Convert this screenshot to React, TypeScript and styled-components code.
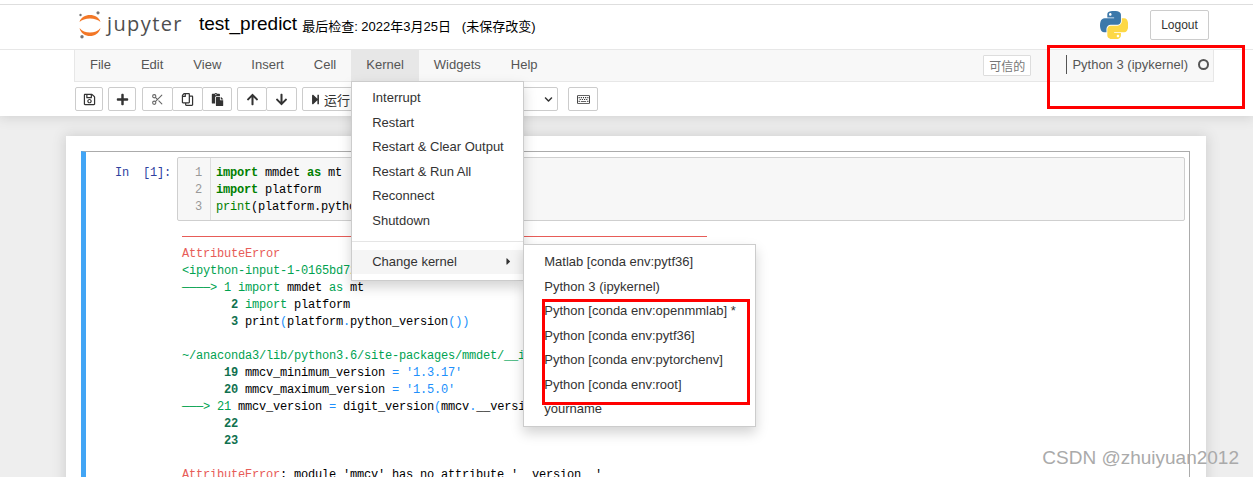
import React from "react";
import styled, { createGlobalStyle } from "styled-components";
import {
  FaRegSave,
  FaPlus,
  FaRegCopy,
  FaPaste,
  FaArrowUp,
  FaArrowDown,
  FaStepForward,
  FaStop,
  FaRedo,
  FaForward,
  FaRegKeyboard,
  FaChevronDown,
  FaCaretRight,
} from "react-icons/fa";
import { FiScissors } from "react-icons/fi";

const GlobalStyle = createGlobalStyle`
  html, body {
    margin: 0;
    padding: 0;
    height: 477px;
    overflow: hidden;
    background: #eeeeee;
  }
  body {
    font-family: "Liberation Sans", "Noto Sans CJK SC", sans-serif;
    font-size: 13px;
    color: #000;
  }
`;

const Page = styled.div`
  position: relative;
  width: 1253px;
  height: 477px;
  overflow: hidden;
`;

const TopArea = styled.div`
  background: #fff;
  padding-top: 4px;
  height: 116px;
  box-sizing: border-box;
  box-shadow: 0 0 12px 1px rgba(87, 87, 87, 0.2);
  position: relative;
  z-index: 2;
`;

const Header = styled.div`
  border-top: 1px solid #dedede;
  border-bottom: 1px solid #e7e7e7;
  height: 40px;
  display: flex;
  align-items: center;
  padding: 0 44px 4px 79px;
`;

const LogoText = styled.span`
  font-family: "Open Sans", sans-serif;
  font-size: 20px;
  line-height: 1;
  color: #4e4e4e;
  margin-left: 4px;
  letter-spacing: 1.4px;
  position: relative;
  top: -1px;
`;

const Title = styled.span`
  font-size: 19px;
  margin-left: 16px;
  position: relative;
  top: -1px;
`;

const Checkpoint = styled.span`
  font-size: 13px;
  margin-left: 5px;
  white-space: pre;
`;

const HeaderRight = styled.div`
  margin-left: auto;
  display: flex;
  align-items: center;
  gap: 22px;
`;

const LogoutButton = styled.button`
  width: 59px;
  height: 30px;
  padding: 0;
  background: #fff;
  border: 1px solid #ccc;
  border-radius: 2px;
  font: 12px "Liberation Sans", sans-serif;
  color: #333;
`;

const MenuBar = styled.div`
  margin-left: 74px;
  width: 1140px;
  height: 32px;
  box-sizing: border-box;
  background: #f8f8f8;
  border: 1px solid #e7e7e7;
  border-top: 0;
  display: flex;
  align-items: stretch;
`;

const NavItem = styled.div<{ $open?: boolean }>`
  position: relative;
  padding: 0 15px 2px;
  display: flex;
  align-items: center;
  color: #555;
  background: ${(p) => (p.$open ? "#e7e7e7" : "transparent")};
`;

const TrustBadge = styled.span`
  margin-left: auto;
  align-self: center;
  width: 48px;
  height: 21px;
  box-sizing: border-box;
  border: 1px solid #ddd;
  border-radius: 1px;
  background: #fff;
  font-size: 12px;
  color: #777;
  display: flex;
  align-items: center;
  justify-content: center;
`;

const KernelStatus = styled.div`
  margin-left: 35px;
  margin-right: 4px;
  padding-bottom: 2px;
  display: flex;
  align-items: center;
  color: #555;
  font-size: 13px;
`;

const Separator = styled.span`
  width: 1px;
  height: 19px;
  background: #555;
  margin-right: 5px;
`;

const KernelDot = styled.span`
  width: 7px;
  height: 7px;
  border: 2px solid #555;
  border-radius: 50%;
  margin-left: 10px;
`;

const Toolbar = styled.div`
  display: flex;
  align-items: center;
  padding: 5px 0 0 75px;
  height: 24px;
`;

const BtnGroup = styled.div<{ $gap?: number }>`
  display: flex;
  margin-right: ${(p) => p.$gap ?? 5}px;
`;

const ToolButton = styled.button<{ $w?: number }>`
  width: ${(p) => p.$w ?? 28}px;
  height: 24px;
  margin: 0 0 0 -1px;
  padding: 0;
  background: #fff;
  border: 1px solid #ccc;
  border-radius: 2px;
  color: #333;
  font: 13px "Liberation Sans", "Noto Sans CJK SC", sans-serif;
  display: flex;
  align-items: center;
  justify-content: center;
  svg {
    font-size: 13px;
  }
  &:first-child {
    margin-left: 0;
  }
`;

const RunButton = styled(ToolButton)`
  justify-content: flex-start;
  gap: 3px;
  padding-left: 7px;
  svg {
    font-size: 11px;
  }
`;

const MirroredCopy = styled(FaRegCopy)`
  transform: scaleX(-1);
`;

const LightScissors = styled(FiScissors)`
  color: #666;
`;

const CellTypeSelect = styled.div`
  width: 99px;
  height: 24px;
  box-sizing: border-box;
  border: 1px solid #ccc;
  border-radius: 2px;
  background: #fff;
  display: flex;
  align-items: center;
  justify-content: space-between;
  padding: 0 4px 0 8px;
  margin-right: 10px;
  color: #333;
  svg {
    font-size: 9px;
  }
`;

const Notebook = styled.div`
  margin: 20px 0 0 66px;
  width: 1140px;
  height: 400px;
  box-sizing: border-box;
  padding: 15px 16px 0 15px;
  background: #fff;
  box-shadow: 0 0 12px 1px rgba(87, 87, 87, 0.2);
`;

const Cell = styled.div`
  border: 1px solid #ababab;
  border-left: 5px solid #42a5f5;
  border-bottom: 0;
  height: 400px;
  box-sizing: border-box;
  padding: 5px 4px 0 0;
  display: grid;
  grid-template-columns: 91px 1fr;
  align-content: start;
  font-family: "Liberation Mono", monospace;
  font-size: 12px;
  line-height: 17px;
  letter-spacing: -0.2px;
`;

const Prompt = styled.div`
  color: #303f9f;
  padding: 8px 6px 0 0;
  text-align: right;
  white-space: pre;
`;

const InputArea = styled.div`
  display: flex;
  height: 64px;
  box-sizing: border-box;
  background: #f7f7f7;
  border: 1px solid #cfcfcf;
  border-radius: 2px;
`;

const Gutter = styled.div`
  width: 33px;
  box-sizing: border-box;
  border-right: 1px solid #ddd;
  padding: 7px 8px 0 0;
  text-align: right;
  color: #999;
`;

const CodeLines = styled.pre`
  margin: 0;
  padding: 7px 0 0 5px;
  font: inherit;
`;

const Keyword = styled.span`
  color: #008000;
  font-weight: bold;
`;

const Builtin = styled.span`
  color: #008000;
`;

const Output = styled.pre`
  grid-column: 2;
  margin: 7px 0 0;
  padding-left: 5px;
  font: inherit;
  white-space: pre;
`;

const ErrorRule = styled.div`
  width: 525px;
  height: 1px;
  background: #e75c58;
  margin: 8px 0 9px;
`;

const Ansi = styled.span<{ $c: "red" | "green" | "blue" | "num" }>`
  color: ${(p) =>
    ({ red: "#e75c58", green: "#00a250", blue: "#208ffb", num: "#10714f" }[p.$c])};
  font-weight: ${(p) => (p.$c === "num" ? "bold" : "normal")};
`;

const Dropdown = styled.div`
  position: absolute;
  top: 100%;
  left: 0;
  z-index: 10;
  width: 173px;
  box-sizing: border-box;
  padding: 3.5px 0 6px;
  background: #fff;
  border: 1px solid #ccc;
  box-shadow: 0 6px 12px rgba(0, 0, 0, 0.175);
  color: #333;
`;

const SubMenu = styled(Dropdown)`
  top: -6px;
  left: 100%;
  width: 233px;
  padding: 5px 0 5px;
`;

const MenuItem = styled.div<{ $active?: boolean }>`
  position: relative;
  display: flex;
  align-items: center;
  justify-content: space-between;
  height: 24.5px;
  padding: 0 9px 0 20px;
  white-space: nowrap;
  background: ${(p) => (p.$active ? "#f5f5f5" : "transparent")};
  svg {
    font-size: 11px;
    color: #333;
  }
`;

const Divider = styled.div`
  height: 1px;
  background: #e5e5e5;
  margin: 8px 0;
`;

const RedBox = styled.div<{ $x: number; $y: number; $w: number; $h: number }>`
  position: absolute;
  left: ${(p) => p.$x}px;
  top: ${(p) => p.$y}px;
  width: ${(p) => p.$w}px;
  height: ${(p) => p.$h}px;
  box-sizing: border-box;
  border: 3px solid #ff0000;
  z-index: 20;
`;

const Watermark = styled.div`
  position: absolute;
  right: 14px;
  bottom: 9px;
  z-index: 30;
  font-size: 19px;
  line-height: 21px;
  color: #aaaaaa;
`;

const JupyterMark = () => (
  <svg width="24" height="28" viewBox="0 0 24 28">
    <circle cx="19" cy="1.8" r="1.6" fill="#767677" />
    <circle cx="1.5" cy="4" r="1.2" fill="#767677" />
    <circle cx="3" cy="25.8" r="1.7" fill="#767677" />
    <path d="M.5 11C3 1.7 19 1.7 21.5 11 17 6.3 5 6.3.5 11Z" fill="#f37726" />
    <path d="M.5 17C3 27.7 19 27.7 21.5 17 17 23 5 23 .5 17Z" fill="#f37726" />
  </svg>
);

const PythonMark = () => (
  <svg width="28" height="28" viewBox="0 0 110 110">
    <path
      fill="#3c78aa"
      d="M54.919.001c-4.584.022-8.961.413-12.812 1.095C30.76 3.099 28.7 7.295 28.7 15.032v10.219h26.813v3.406H18.638c-7.793 0-14.616 4.684-16.75 13.594-2.462 10.213-2.571 16.586 0 27.25 1.905 7.938 6.457 13.594 14.25 13.594h9.218v-12.25c0-8.85 7.657-16.656 16.75-16.656h26.782c7.454 0 13.406-6.138 13.406-13.625V15.032c0-7.266-6.13-12.725-13.406-13.937C64.282.328 59.502-.02 54.919.001zm-14.5 8.219c2.77 0 5.031 2.299 5.031 5.125 0 2.816-2.262 5.094-5.031 5.094-2.78 0-5.031-2.278-5.031-5.094 0-2.826 2.252-5.125 5.031-5.125z"
    />
    <path
      fill="#fdd845"
      d="M85.638 28.657v11.906c0 9.231-7.826 17-16.75 17H42.106c-7.336 0-13.406 6.278-13.406 13.625v25.531c0 7.266 6.319 11.54 13.406 13.625 8.488 2.496 16.627 2.947 26.782 0 6.75-1.954 13.406-5.888 13.406-13.625V86.501H55.513v-3.406h40.188c7.793 0 10.696-5.436 13.406-13.594 2.8-8.399 2.68-16.476 0-27.25-1.926-7.757-5.604-13.594-13.406-13.594zm-15.063 64.656c2.78 0 5.031 2.278 5.031 5.094 0 2.826-2.252 5.125-5.031 5.125-2.77 0-5.031-2.299-5.031-5.125 0-2.816 2.262-5.094 5.031-5.094z"
    />
  </svg>
);

const kernelItems = ["Interrupt", "Restart", "Restart & Clear Output", "Restart & Run All", "Reconnect", "Shutdown"];

const kernelChoices = [
  "Matlab [conda env:pytf36]",
  "Python 3 (ipykernel)",
  "Python [conda env:openmmlab] *",
  "Python [conda env:pytf36]",
  "Python [conda env:pytorchenv]",
  "Python [conda env:root]",
  "yourname",
];

export default function App() {
  return (
    <Page>
      <GlobalStyle />
      <TopArea>
        <Header>
          <JupyterMark />
          <LogoText>jupyter</LogoText>
          <Title>test_predict</Title>
          <Checkpoint>最后检查: 2022年3月25日   (未保存改变)</Checkpoint>
          <HeaderRight>
            <PythonMark />
            <LogoutButton>Logout</LogoutButton>
          </HeaderRight>
        </Header>
        <MenuBar>
          <NavItem>File</NavItem>
          <NavItem>Edit</NavItem>
          <NavItem>View</NavItem>
          <NavItem>Insert</NavItem>
          <NavItem>Cell</NavItem>
          <NavItem $open>
            Kernel
            <Dropdown>
              {kernelItems.map((item) => (
                <MenuItem key={item}>{item}</MenuItem>
              ))}
              <Divider />
              <MenuItem $active>
                Change kernel
                <FaCaretRight />
                <SubMenu>
                  {kernelChoices.map((item) => (
                    <MenuItem key={item}>{item}</MenuItem>
                  ))}
                </SubMenu>
              </MenuItem>
            </Dropdown>
          </NavItem>
          <NavItem>Widgets</NavItem>
          <NavItem>Help</NavItem>
          <TrustBadge>可信的</TrustBadge>
          <KernelStatus>
            <Separator />
            Python 3 (ipykernel)
            <KernelDot />
          </KernelStatus>
        </MenuBar>
        <Toolbar>
          <BtnGroup $gap={5}>
            <ToolButton><FaRegSave /></ToolButton>
          </BtnGroup>
          <BtnGroup $gap={6}>
            <ToolButton><FaPlus /></ToolButton>
          </BtnGroup>
          <BtnGroup $gap={5}>
            <ToolButton $w={31}><LightScissors /></ToolButton>
            <ToolButton $w={31}><MirroredCopy /></ToolButton>
            <ToolButton $w={30}><FaPaste /></ToolButton>
          </BtnGroup>
          <BtnGroup $gap={5}>
            <ToolButton $w={30}><FaArrowUp /></ToolButton>
            <ToolButton $w={31}><FaArrowDown /></ToolButton>
          </BtnGroup>
          <BtnGroup $gap={5}>
            <RunButton $w={65}><FaStepForward />运行</RunButton>
            <ToolButton $w={30}><FaStop /></ToolButton>
            <ToolButton $w={30}><FaRedo /></ToolButton>
            <ToolButton $w={30}><FaForward /></ToolButton>
          </BtnGroup>
          <CellTypeSelect>
            代码
            <FaChevronDown />
          </CellTypeSelect>
          <BtnGroup>
            <ToolButton $w={30}><FaRegKeyboard /></ToolButton>
          </BtnGroup>
        </Toolbar>
      </TopArea>
      <Notebook>
        <Cell>
          <Prompt>In  [1]:</Prompt>
          <InputArea>
            <Gutter>1<br />2<br />3</Gutter>
            <CodeLines>
              <Keyword>import</Keyword> mmdet <Keyword>as</Keyword> mt{"\n"}
              <Keyword>import</Keyword> platform{"\n"}
              <Builtin>print</Builtin>(platform.python_version())
            </CodeLines>
          </InputArea>
          <Output>
            <ErrorRule />
            <Ansi $c="red">AttributeError</Ansi>{"\n"}
            <Ansi $c="green">{"<ipython-input-1-0165bd72a6c4>"}</Ansi>{"\n"}
            <Ansi $c="green">{"────> 1 import"}</Ansi> mmdet <Ansi $c="green">as</Ansi> mt{"\n"}
            {"       "}<Ansi $c="num">2</Ansi> <Ansi $c="green">import</Ansi> platform{"\n"}
            {"       "}<Ansi $c="num">3</Ansi> print<Ansi $c="blue">(</Ansi>platform<Ansi $c="blue">.</Ansi>python_version<Ansi $c="blue">())</Ansi>{"\n"}
            {"\n"}
            <Ansi $c="green">~/anaconda3/lib/python3.6/site-packages/mmdet/__init__.py</Ansi>{"\n"}
            {"      "}<Ansi $c="num">19</Ansi> mmcv_minimum_version <Ansi $c="blue">=</Ansi> <Ansi $c="blue">'1.3.17'</Ansi>{"\n"}
            {"      "}<Ansi $c="num">20</Ansi> mmcv_maximum_version <Ansi $c="blue">=</Ansi> <Ansi $c="blue">'1.5.0'</Ansi>{"\n"}
            <Ansi $c="green">{"───> 21"}</Ansi> mmcv_version <Ansi $c="blue">=</Ansi> digit_version<Ansi $c="blue">(</Ansi>mmcv<Ansi $c="blue">.</Ansi>__version__<Ansi $c="blue">)</Ansi>{"\n"}
            {"      "}<Ansi $c="num">22</Ansi>{"\n"}
            {"      "}<Ansi $c="num">23</Ansi>{"\n"}
            {"\n"}
            <Ansi $c="red">AttributeError</Ansi>: module 'mmcv' has no attribute '__version__'
          </Output>
        </Cell>
      </Notebook>
      <RedBox $x={1047} $y={45} $w={198} $h={64} />
      <RedBox $x={542} $y={299} $w={208} $h={106} />
      <Watermark>CSDN @zhuiyuan2012</Watermark>
    </Page>
  );
}
